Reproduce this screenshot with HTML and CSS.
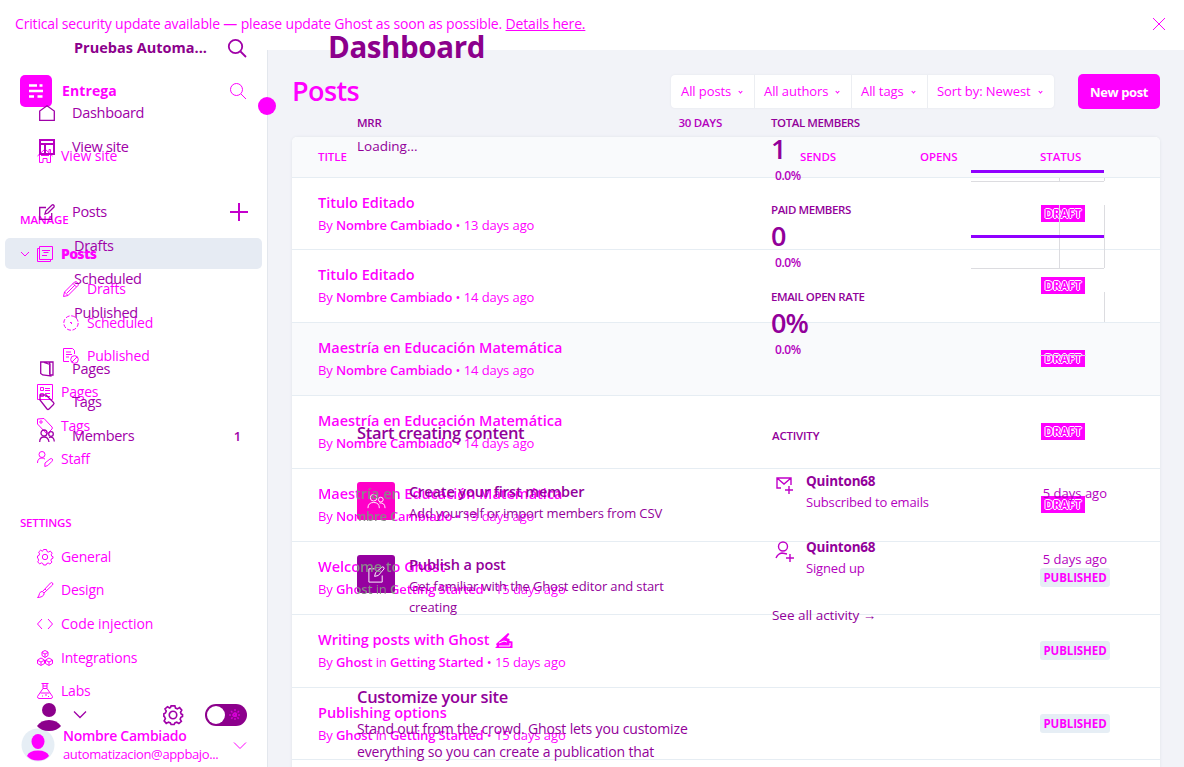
FILE: index.html
```html
<!DOCTYPE html>
<html lang="en">
<head>
<meta charset="utf-8">
<title>Posts / Dashboard</title>
<link rel="stylesheet" href="styles.css">
</head>
<body>
<div class="app">
  <div class="alert"><p>Critical security update available — please update Ghost as soon as possible. <u>Details here.</u></p>
    <svg class="close" viewBox="0 0 12 12"><path d="M0 0l12 12M12 0L0 12"/></svg></div>
  <div class="body">
    <nav class="side">
      <div class="brand"><span class="logo"><svg viewBox="0 0 32 32"><path d="M9 10.500h8M19.500 10.500h3M9 16h14M9 21.500h5M17.500 21.500h5"/></svg></span><b>Entrega</b>
        <svg class="i" viewBox="0 0 16 16"><circle cx="6.500" cy="6.500" r="6"/><path d="M11 11l5 5"/></svg></div>
      <div class="item view"><svg class="i" viewBox="0 0 16 16"><path d="M.5 8L8 1l7.500 7M2.500 7v7.500h3.500v-4h4v4h3.500V7M12 4.500V1.500h1.500v4M4 7.500h8"/></svg>View site</div>
      <div class="label manage">Manage</div>
      <div class="item active"><svg class="chev" viewBox="0 0 10 6"><path d="M1 1l4 4 4-4"/></svg><svg class="i" viewBox="0 0 16 16"><path d="M2.500.5h13v13h-13zM2.500 2.500h-2v13h13v-2M5 4.500h8M6.500 6.500h5M5 9.500h5"/></svg><b>Posts</b></div>
      <div class="item sub first"><svg class="i" viewBox="0 0 16 16"><path d="M.5 15.500l1-4.500L11.500 1q1.500-1 3 .5t.5 3L5 14.500zM1.500 11l3.500 3.500M10 2.500L13.500 6M4 12l8-8"/></svg>Drafts</div>
      <div class="item sub"><svg class="i" viewBox="0 0 16 16"><circle cx="8" cy="8" r="7.200" stroke-dasharray="4 1.650"/><path d="M7 7.500h1.500V9"/></svg>Scheduled</div>
      <div class="item sub"><svg class="i" viewBox="0 0 16 16"><path d="M6 13.500H.5V.5h9l2 2V6M3 4h5M3 6.500h6M3 9h3"/><circle cx="11.500" cy="11.500" r="3.800"/><path d="M9 14l5-5"/></svg>Published</div>
      <div class="item pages"><svg class="i" viewBox="0 0 16 16"><path d="M.5.5h15v15H.5zM3.500 3.500h3v3h-3zM3.500 9.500h3v3h-3zM8 4.500h5M8 6.500h5M8 9.500h5M8 12.500h5"/></svg>Pages</div>
      <div class="item"><svg class="i" viewBox="0 0 16 16"><path d="M.5 1v5l8.500 9q1 .8 2 0l4-4q.8-1 0-2L7 .5z"/><circle cx="4" cy="4" r="1.200"/></svg>Tags</div>
      <div class="item"><svg class="i" viewBox="0 0 16 16"><circle cx="5" cy="3.500" r="3"/><path d="M.5 12q0-5 4.500-5 2 0 3 1.200M8 12l5-4q1.500-1 2.300 0 .8 1-.5 2.500l-4 4-3 1z"/></svg>Staff</div>
      <div class="label settings">Settings</div>
      <div class="item general"><svg class="i" viewBox="0 0 16 16"><path d="M6.500.5h3l.5 2 1.500.6 1.800-1 1.900 2-1 1.700.6 1.500 1.200.4v1.500l-1.500.6-.6 1.500 1 1.800-2 1.900-1.700-1-1.500.6-.6 1.400H6.500l-.6-1.500-1.500-.6-1.800 1-1.900-2 1-1.700-.6-1.500L.5 9V7l1.500-.6.6-1.500-1-1.800 2-1.900 1.700 1L6 1.700z"/><circle cx="8" cy="8" r="2.700"/></svg>General</div>
      <div class="item"><svg class="i" viewBox="0 0 16 16"><path d="M.5 15.500q1.500-1 2-4 1-2.500 3-2l1.500 1.700q.5 2-2 3.300-2 1-4.500 1M5.500 9.500l8-8.500q1.200-1 2 0t0 2L7 11M8 7l1.500 1.500"/></svg>Design</div>
      <div class="item code"><svg class="i" viewBox="0 0 16 16"><path d="M5 3L.5 8 5 13M11 3l4.500 5-4.500 5"/></svg>Code injection</div>
      <div class="item"><svg class="i" viewBox="0 0 16 16"><path d="M8 .5l3 1.500v3.500l-3 2-3-2V2zM8 7.500V4L5 2.500M8 4l3-1.500M4 8l3.500 2v3.500L4 15.500l-3.500-2V10zM4 15v-3L1 10.500M4 12l3-1.500M12 8l3.500 2v3.500l-3.500 2-3.500-2V10zM12 15v-3l-3-1.500M12 12l3-1.500"/></svg>Integrations</div>
      <div class="item"><svg class="i" viewBox="0 0 16 16"><path d="M4.500.5h7M6 .5v5l-5.500 8q0 2 1.500 2h12q1.500 0 1.500-2L10 5.500v-5M6 3h4M6 5.500h4M3.500 10h9M5 13h1M8 12h2M11 13.500h1"/></svg>Labs</div>
      <div class="profile"><svg class="avatar" viewBox="0 0 34 34"><circle class="disc" cx="17" cy="17" r="16.500"/><ellipse class="fill" cx="17" cy="13.500" rx="6.500" ry="7.500"/><path class="fill" d="M6 28q2-5.500 11-5.500T28 28q-4 4.500-11 4.500T6 28z"/></svg>
        <div class="who"><b>Nombre Cambiado</b><span>automatizacion@appbajo...</span></div><svg class="caret" viewBox="0 0 12 7"><path d="M0 .5l6 6 6-6"/></svg></div>
      <span class="pin"></span>
    </nav>
    <main class="main">
      <header class="head"><h1>Posts</h1>
        <div class="filters"><span class="f1">All posts<i></i></span><span class="f2">All authors<i></i></span><span class="f3">All tags<i></i></span><span class="f4">Sort by: Newest<i></i></span></div>
        <button class="new">New post</button></header>
      <section class="table">
        <div class="row thead"><span>Title</span><span>Sends</span><span>Opens</span><span>Status</span></div>
        <div class="row short"><div><h3>Titulo Editado</h3><p>By <b>Nombre Cambiado</b> • 13 days ago</p></div><span class="draft">Draft</span></div>
        <div class="row"><div><h3>Titulo Editado</h3><p>By <b>Nombre Cambiado</b> • 14 days ago</p></div><span class="draft">Draft</span></div>
        <div class="row hover"><div><h3>Maestría en Educación Matemática</h3><p>By <b>Nombre Cambiado</b> • 14 days ago</p></div><span class="draft">Draft</span></div>
        <div class="row"><div><h3>Maestría en Educación Matemática</h3><p>By <b>Nombre Cambiado</b> • 14 days ago</p></div><span class="draft">Draft</span></div>
        <div class="row mixed"><div><h3>Maestría en Educación Matemática</h3><p>By <b>Nombre Cambiado</b> • 13 days ago</p></div><span class="draft">Draft</span></div>
        <div class="row mixed"><div><h3>Welcome to Ghost</h3><p>By <b>Ghost</b> in <b>Getting Started</b> • 15 days ago</p></div><span class="pub">Published</span></div>
        <div class="row"><div><h3>Writing posts with Ghost <svg class="hand" viewBox="0 0 18 16"><path class="fill" d="M1 11L13 0l1.500 1-3 4 3 1v2l3 .5V15H0l2-2z"/><path class="cut" d="M4 13h11v-3M4 10l5-2 3 1"/></svg></h3><p>By <b>Ghost</b> in <b>Getting Started</b> • 15 days ago</p></div><span class="pub">Published</span></div>
        <div class="row short"><div><h3>Publishing options</h3><p>By <b>Ghost</b> in <b>Getting Started</b> • 15 days ago</p></div><span class="pub">Published</span></div>
      </section>
    </main>
  </div>
</div>

<div class="overlay">
  <nav class="o-side">
    <div class="o-brand"><b>Pruebas Automa...</b><svg viewBox="0 0 18 18"><circle cx="7.500" cy="7.500" r="6.700"/><path d="M12.500 12.500L18 18"/></svg></div>
    <div class="o-item dash"><svg class="i" viewBox="0 0 16 16"><path d="M.7 15.300V6L8 .8 15.300 6v9.300z"/></svg>Dashboard</div>
    <div class="o-item"><svg class="i bold" viewBox="0 0 16 16"><path d="M1 1h14v14H1zM1 5h14M6 5v10"/></svg>View site</div>
    <div class="o-item posts"><svg class="i" viewBox="0 0 16 16"><path d="M7 3.500H.7v11.800h12V9M6 10l.8-3L13 1q1-.6 1.800.2T15 3L9 9z"/></svg>Posts<svg class="plus" viewBox="0 0 18 18"><path d="M9 0v18M0 9h18"/></svg></div>
    <div class="o-item o-sub drafts">Drafts</div>
    <div class="o-item o-sub">Scheduled</div>
    <div class="o-item o-sub">Published</div>
    <div class="o-item o-pages"><svg class="i" viewBox="0 0 16 16"><path d="M1.700 1h9v12l1 2-8-1-2-1.500zM5 1.500l6 2V15M10.500 1H14v13h-2.500"/></svg>Pages</div>
    <div class="o-item"><svg class="i" viewBox="0 0 16 16"><path d="M1 1v5l7 9q1 1 2 0l4.500-4.500q1-1 0-2L7 1z"/></svg>Tags</div>
    <div class="o-item"><svg class="i" viewBox="0 0 16 16"><circle cx="5" cy="5" r="3"/><circle cx="12" cy="6" r="2.300"/><path d="M.7 14q0-5 4.300-5t5 5M10 9.500q5-1.500 5.300 4"/></svg>Members<b>1</b></div>
    <div class="o-foot"><svg class="person" viewBox="0 0 24 28"><circle cx="12" cy="7" r="7"/><path d="M0 23q4-6 12-6t12 6q-4 5-12 5T0 23z"/></svg>
      <svg class="o-caret" viewBox="0 0 12 7"><path d="M0 .5l6 6 6-6"/></svg>
      <svg class="gear" viewBox="0 0 16 16"><path d="M6.500.7h3l.5 1.800 1.500.6 1.800-1 1.700 2-1 1.700.6 1.500 1 .4v1.500l-1.300.6-.6 1.500 1 1.800-2 1.700-1.700-1-1.500.6-.6 1.200H6.500l-.6-1.300-1.500-.6-1.800 1-1.700-2 1-1.700-.6-1.500L.7 9V7L2 6.400l.6-1.500-1-1.800 2-1.700 1.700 1L6 1.900z"/><circle cx="8" cy="8" r="3"/></svg>
      <svg class="toggle" viewBox="0 0 42 22"><rect width="42" height="22" rx="11"/><circle class="knob" cx="11" cy="11" r="9"/><path class="sun" d="M30 5v12M24 11h12M26 7l8 8M34 7l-8 8"/></svg></div>
  </nav>
  <section class="o-main">
    <h2 class="o-title">Dashboard</h2>
    <div class="o-cols">
      <div class="left">
        <div class="mrr"><span>MRR</span><span>30 Days</span></div>
        <p class="loading">Loading...</p>
        <h4 class="start">Start creating content</h4>
        <div class="tip"><span class="box pink"><svg viewBox="0 0 20 20"><circle cx="7" cy="6" r="3.500"/><circle cx="14.500" cy="8" r="2.500"/><path d="M1 17q0-6 6-6t6 6M13 11.500q6-.5 6 5.500"/></svg></span><div><h5>Create your first member</h5><p>Add yourself or import members from CSV</p></div></div>
        <div class="tip"><span class="box violet"><svg viewBox="0 0 20 20"><path d="M8 4H2v14h14v-7M8 12l1-4 7-6q2-.5 2 2l-6 7z"/></svg></span><div><h5>Publish a post</h5><p>Get familiar with the Ghost editor and start<br>creating</p></div></div>
        <h4 class="custom">Customize your site</h4>
        <p class="stand">Stand out from the crowd. Ghost lets you customize<br>everything so you can create a publication that</p>
      </div>
      <div class="right">
        <div class="stat"><div><h6>Total members</h6><strong>1</strong><small>0.0%</small></div><svg class="chart" viewBox="0 0 134 87"><path class="grid" d="M0 64.500h133M88.500 61v4M133.500 61v3"/><path class="line" d="M0 54.500h133"/></svg></div>
        <div class="stat"><div><h6>Paid members</h6><strong>0</strong><small>0.0%</small></div><svg class="chart" viewBox="0 0 134 87"><path class="grid" d="M0 64.500h133M88.500 1v63M133.500 1v63"/><path class="line" d="M0 32.500h133"/></svg></div>
        <div class="stat"><div><h6>Email open rate</h6><strong>0%</strong><small>0.0%</small></div><svg class="chart" viewBox="0 0 134 87"><path class="grid" d="M133.500 1v30M69 64.500h46"/></svg></div>
        <h6 class="act">Activity</h6>
        <div class="event"><svg viewBox="0 0 20 20"><path d="M6 13H2V3h14v7M2 3l7 6 7-6M14 11v8M10 15h8"/></svg><div><b>Quinton68</b><p>Subscribed to emails</p></div><time>5 days ago</time></div>
        <div class="event"><svg viewBox="0 0 20 20"><circle cx="8" cy="5.500" r="4.500"/><path d="M1 17q2-4.500 6-5l5 1M15 13v8M11 17h8"/></svg><div><b>Quinton68</b><p>Signed up</p></div><time>5 days ago</time></div>
        <p class="see">See all activity →</p>
      </div>
    </div>
  </section>
</div>
</body>
</html>
```

FILE: styles.css
```css
:root { --m: #ff00ff; --p: #92009a; --q: #b400be; }
* { box-sizing: border-box; }
body { margin: 0; width: 1184px; height: 767px; overflow: hidden; position: relative; background: #fff; color: var(--m); font: 14px/20px "Open Sans", "Noto Sans", sans-serif; letter-spacing: -.2px; white-space: nowrap; }
h1, h2, h3, h4, h5, h6, p { margin: 0; }
b, h3, h4, h5 { font-weight: 600; }
svg { fill: none; stroke: currentColor; flex: none; overflow: visible; }
.fill { fill: currentColor; stroke: none; }
.i { width: 16px; height: 16px; }
.app { height: 767px; display: flex; flex-direction: column; }
.alert { height: 50px; flex: none; padding: 0 19px 2px 15px; display: flex; align-items: center; justify-content: space-between; letter-spacing: -.16px; }
.close { width: 12px; height: 12px; }
.body { display: flex; height: 717px; }

.side { width: 268px; flex: none; border-right: 1px solid #e3e7ed; position: relative; padding-top: 24px; }
.brand { height: 34px; padding: 0 21px 0 20px; display: flex; align-items: center; gap: 10px; }
.brand b { font-weight: 700; flex: 1; letter-spacing: .1px; }
.logo { width: 32px; height: 32px; border-radius: 5px; background: var(--m); color: #fff; display: flex; }
.logo path { stroke-width: 2.600; }
.item { height: 33.6px; padding-left: 37px; display: flex; align-items: center; gap: 8px; }
.view { margin-top: 31.2px; letter-spacing: -.1px; }
.code { letter-spacing: -.05px; }
.label { height: 16px; line-height: 16px; padding-left: 20px; font-size: 11.500px; font-weight: 600; text-transform: uppercase; }
.manage { margin-top: 39.2px; }
.active { height: 31px; margin: 10px 5px 0; padding: 1px 0 0 15px; background: #e6ebf3; border-radius: 5px; gap: 7px; }
.active b { font-weight: 800; letter-spacing: -.7px; margin-left: 1px; }
.chev { width: 10px; height: 6px; }
.sub { padding-left: 63px; }
.first { margin-top: 3.2px; }
.pages { margin-top: 2.2px; }
.settings { margin-top: 39px; }
.general { margin-top: 9.2px; }
.profile { height: 36px; margin-top: 19.3px; padding: 0 21px; display: flex; align-items: center; }
.avatar { width: 34px; height: 34px; margin-right: 8px; }
.disc { fill: #e6eef5; stroke: none; }
.who { flex: 1; display: flex; flex-direction: column; line-height: 18px; }
.who b { letter-spacing: -.28px; }
.who span { font-size: 13px; letter-spacing: -.38px; }
.caret { width: 12px; height: 7px; }
.pin { position: absolute; left: 258px; top: 47px; width: 18px; height: 18px; border-radius: 50%; background: var(--m); }

.main { flex: 1; background: #f2f3f8; padding: 23px 24px 0; }
.head { height: 36px; display: flex; align-items: center; }
.head h1 { font-size: 27px; line-height: 36px; font-weight: 600; flex: 1; letter-spacing: -.6px; }
.filters { height: 33px; display: flex; background: #fff; border-radius: 4px; box-shadow: 0 0 2px #dfe2e9; font-size: 13px; letter-spacing: -.08px; margin-right: 24px; }
.filters span { display: flex; align-items: center; justify-content: space-between; padding: 0 12px 0 9px; border-left: 1px solid #eceef2; }
.filters span:first-child { border: 0; padding-left: 10px; }
.filters i { width: 3px; height: 3px; border: solid; border-width: 0 1px 1px 0; transform: rotate(45deg); }
.f1 { width: 83px; } .f2 { width: 97px; } .f3 { width: 76px; } .f4 { width: 127px; }
.new { width: 82px; height: 35px; border: 0; border-radius: 5px; background: var(--m); color: #fff; font: 700 13px "Open Sans", sans-serif; letter-spacing: -.4px; padding: 2px 0 0; }
.table { margin-top: 28px; background: #fff; border-radius: 5px 5px 0 0; box-shadow: 0 0 3px #dfe2e9; height: 640px; overflow: hidden; }
.row { height: 73px; display: grid; grid-template-columns: 722px auto; align-items: center; padding: 0 0 1px 26px; border-bottom: 1px solid #e6edf3; }
.row.short { height: 72px; padding-bottom: 0; }
.row.thead { height: 41px; grid-template-columns: 482px 120px 120px auto; background: #f9fafc; font-size: 11.500px; font-weight: 600; text-transform: uppercase; letter-spacing: -.08px; padding-bottom: 0; }
.row.hover { background: #f9fafc; }
.row h3 { font-size: 14.500px; line-height: 22px; letter-spacing: .05px; }
.row h3 { letter-spacing: -.03px; }
.row p { font-size: 13px; line-height: 22px; letter-spacing: -.08px; }
.row p b { letter-spacing: -.16px; }
.mixed > div { position: relative; z-index: 2; }
.mixed h3, .mixed p { color: transparent; background: linear-gradient(90deg, var(--m) 39px, #898989 39px 77px, var(--m) 77px); background-clip: text; }
.draft, .pub { justify-self: start; font-size: 11.500px; font-weight: 700; text-transform: uppercase; }
.draft { width: 44px; height: 17px; line-height: 18px; margin-left: 1px; text-align: center; background: var(--m); text-shadow: 1px 0 #fff, -1px 0 #fff, 0 1px #fff, 0 -1px #fff; letter-spacing: 0; }
.pub { width: 70px; height: 19px; line-height: 19px; text-align: center; border-radius: 3px; background: #e6eef5; letter-spacing: -.1px; }
.hand { width: 18px; height: 16px; vertical-align: -4px; margin-left: 2px; }
.cut { stroke: #fff; }

.overlay { position: absolute; inset: 0; display: flex; color: var(--p); }
.o-side { width: 268px; flex: none; padding-top: 31px; }
.o-side svg { stroke-width: 1.300; color: #a000a8; }
.o-brand { height: 34px; padding: 0 22px 0 74px; display: flex; align-items: center; justify-content: space-between; }
.o-brand b { font-weight: 700; font-size: 14.500px; letter-spacing: 0; color: #8c008c; }
.o-brand svg { width: 18px; height: 18px; stroke-width: 1.800; }
.o-item { height: 33.6px; padding: 0 20px 0 39px; display: flex; align-items: center; gap: 17px; font-size: 14.500px; letter-spacing: -.3px; color: #a000a8; }
.o-item .bold { stroke-width: 2; color: #b800c0; }
.dash { margin-top: 31.2px; }
.posts { margin-top: 31.8px; }
.o-side .plus { width: 18px; height: 18px; margin-left: auto; stroke-width: 2; color: #c400cc; }
.o-sub { padding-left: 74px; }
.drafts { margin-top: .2px; }
.o-pages { margin-top: 22.2px; }
.o-item b { margin: 0 7px 0 auto; font-size: 13px; }
.o-foot { height: 34px; margin-top: 245px; padding: 0 21px 0 37px; display: flex; align-items: center; }
.o-foot .person { width: 24px; height: 28px; margin: 4px 13px 0 0; fill: #8c008c; stroke: none; }
.o-foot .o-caret { width: 12px; height: 7px; }
.o-foot .gear { width: 20px; height: 20px; margin: 0 22px 0 auto; }
.o-foot .toggle { width: 42px; height: 22px; fill: #8c008c; stroke: none; }
.toggle .knob { fill: #fff; }
.toggle .sun { stroke: #d400d4; stroke-width: 1.500; stroke-dasharray: 2 1; }

.o-main { flex: 1; padding: 29px 79px 0 61px; }
.o-title { font-size: 29.500px; line-height: 36px; font-weight: 700; letter-spacing: -.4px; margin-left: -1px; color: #8c008c; }
.o-cols { display: flex; padding: 48px 0 0 28px; }
.left { width: 414px; }
.mrr { width: 365px; height: 20px; display: flex; justify-content: space-between; font-size: 11.500px; font-weight: 600; letter-spacing: -.25px; text-transform: uppercase; }
.mrr span + span { color: var(--q); }
.loading { margin-top: 3px; font-size: 13.500px; letter-spacing: 0; }
.left h4 { font-size: 16.500px; line-height: 24px; letter-spacing: -.32px; }
.start { margin-top: 265px; }
.tip { height: 73px; display: flex; gap: 14px; }
.start + .tip { margin-top: 37px; }
.tip > div { position: relative; z-index: 3; margin-top: -2px; }
.tip h5 { font-size: 14.500px; line-height: 23px; letter-spacing: -.1px; }
.tip p { font-size: 13px; line-height: 21px; letter-spacing: -.13px; }
.box { position: relative; z-index: 1; width: 38px; height: 38px; border-radius: 3px; color: #fff; display: grid; place-items: center; }
.box svg { width: 19px; height: 19px; }
.pink { background: #ff00c8; }
.violet { background: #9600a0; }
.custom { margin-top: 57px; }
.stand { margin-top: 8px; line-height: 23px; letter-spacing: -.15px; }
.right { width: 334px; }
.stat { height: 87px; display: flex; justify-content: space-between; }
.stat > div { display: flex; flex-direction: column; }
h6 { font-size: 11.500px; line-height: 20px; font-weight: 600; text-transform: uppercase; letter-spacing: -.42px; }
.stat strong { font-size: 27px; line-height: 32px; font-weight: 600; letter-spacing: -.9px; }
.stat small { font-size: 12px; line-height: 18px; font-weight: 600; padding-left: 4px; margin-top: 2px; letter-spacing: -.45px; color: var(--q); }
.chart { width: 134px; height: 87px; margin-top: 4px; }
.grid { stroke: #dcdce0; }
.line { stroke: #9000ff; stroke-width: 3; }
.act { margin: 52px 0 0 1px; letter-spacing: -.2px; }
.event { display: flex; height: 66px; align-items: flex-start; }
.act + .event { margin-top: 24px; }
.event > svg { width: 20px; height: 20px; margin: 5px 11px 0 4px; color: #c000c8; stroke-width: 1.400; }
.event > div { flex: 1; }
.event b { display: block; line-height: 22px; font-weight: 700; letter-spacing: -.2px; font-size: 13.500px; }
.event p { font-size: 13px; line-height: 20px; letter-spacing: -.15px; color: var(--q); }
.event time { font-size: 13px; line-height: 20px; margin: 13px -2px 0 0; letter-spacing: 0; color: var(--q); }
.see { margin: 3px 0 0 1px; font-size: 13.500px; letter-spacing: -.03px; }
```
